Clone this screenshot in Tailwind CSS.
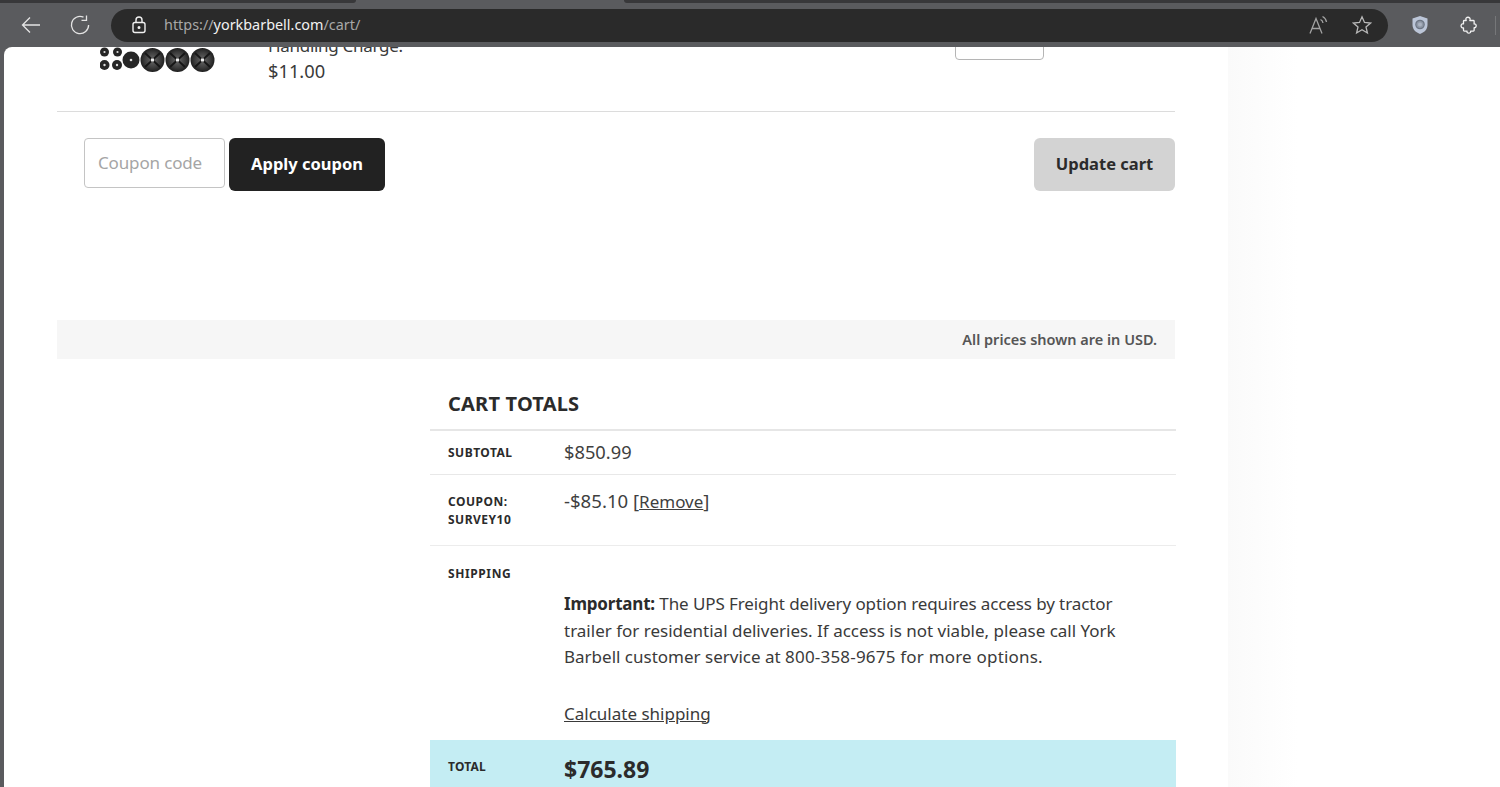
<!DOCTYPE html>
<html>
<head>
<meta charset="utf-8">
<script src="https://cdn.jsdelivr.net/npm/@tailwindcss/browser@4"></script>
<title>Cart</title>
</head>
<body class="h-[787px] w-[1500px] overflow-hidden bg-[#5a5b5e] font-['Noto_Sans','Liberation_Sans',sans-serif] text-[#2b2b2b]">
  <div class="flex h-[3px] w-full">
    <div class="w-[356px] rounded-br-[4px] bg-[#38383a]"></div>
    <div class="ml-[268px] flex-1 rounded-bl-[4px] bg-[#38383a]"></div>
  </div>
  <header class="flex h-[44px] items-center">
    <div class="flex w-[111px] items-center pl-[20px]">
      <svg class="h-[22px] w-[22px]" viewBox="0 0 22 22" fill="none" stroke="#e4e4e4" stroke-width="1.3"><path d="M20 11H2.500M10 3.500 2.500 11l7.500 7.500"/></svg>
      <svg class="ml-[27px] h-[22px] w-[22px]" viewBox="0 0 22 22" fill="none" stroke="#e4e4e4" stroke-width="1.3"><path d="M14.500 3.200A8.600 8.600 0 1 0 19.600 11"/><path d="M17.500 1.500v4.800h-5"/></svg>
    </div>
    <div class="flex h-[33px] w-[1277px] items-center rounded-full bg-[#2a2a2a] pl-[20px] pr-[16px]">
      <svg class="h-[18px] w-[16px]" viewBox="0 0 16 18" fill="none" stroke="#f0f0f0" stroke-width="1.400"><rect x="2" y="6.500" width="12" height="10" rx="2"/><path d="M5 6.500V4a3 3 0 0 1 6 0v2.500"/><circle cx="8" cy="11.500" r=".8" fill="#f0f0f0"/></svg>
      <div class="ml-[17px] text-[14.4px] text-[#a8a8a8]">https://<span class="text-[#f2f2f2]">yorkbarbell.com</span>/cart/</div>
      <svg class="ml-auto mr-[1px] h-[20px] w-[20px]" viewBox="0 0 20 20" fill="none" stroke="#a2a2a2" stroke-width="1.300"><path d="M1 18.500 7 3.500l6 15M3 13.500h8"/><path d="M11.500 4.500a4.500 4.500 0 0 1 2.500 3.500M13.500 1.500a7.500 7.500 0 0 1 4 5.500"/></svg>
      <svg class="ml-[22px] h-[20px] w-[20px]" viewBox="0 0 20 20" fill="none" stroke="#b8b8b8" stroke-width="1.300"><path d="m10 1.800 2.500 5.600 6.100.6-4.600 4 1.400 6-5.400-3.200L4.600 18l1.400-6-4.600-4 6.100-.6z"/></svg>
    </div>
    <svg class="ml-[23px] h-[20px] w-[18px]" viewBox="0 0 18 20"><path d="M9 1 16.500 3.500V10c0 4.500-3.500 7.500-7.500 9-4-1.500-7.500-4.500-7.500-9V3.500z" fill="#bcc6d8"/><circle cx="9" cy="9.500" r="4.200" fill="#8f98a6" stroke="#6d7684" stroke-width="1.200"/><circle cx="9" cy="9.500" r="2" fill="#aab2c0"/></svg>
    <svg class="ml-[30px] h-[18px] w-[18px]" viewBox="0 0 22 22" fill="none" stroke="#f2f2f2" stroke-width="1.600" stroke-linejoin="round"><path d="M8.500 4.500C8 2.800 9.300 1.500 11 1.500s2.900 1.400 2.500 3l-.3 1h4.300c.6 0 1 .4 1 1v3.300c1.700-.4 2.500.8 2.500 2.200s-.9 2.700-2.500 2.200v3.300c0 .6-.4 1-1 1h-3.300c.4 1.600-.8 2.500-2.200 2.500s-2.600-1-2.200-2.500H6.500c-.6 0-1-.4-1-1v-3c-1.700.5-3-.8-3-2.500s1.300-2.900 3-2.500V6.500c0-.6.4-1 1-1h2.300z"/></svg>
    <div class="ml-[18px] h-[19px] w-px bg-[#767779]"></div>
  </header>
  <main class="relative ml-[4px] h-[740px] overflow-hidden rounded-tl-[8px] bg-white">
    <div class="absolute inset-y-0 left-[1224px] w-[70px] bg-gradient-to-r from-[#fafafa] to-white"></div>
    <div class="relative ml-[53px] w-[1118px]">
      <section class="relative h-[65px] border-b border-[#dcdcdc]">
        <svg class="absolute left-[43px] top-[-4px] h-[34px] w-[120px]" viewBox="0 0 120 34">
          <defs>
            <radialGradient id="plate"><stop offset="0" stop-color="#6a6a6a"/><stop offset=".65" stop-color="#3c3c3c"/><stop offset="1" stop-color="#1f1f1f"/></radialGradient>
          </defs>
          <g fill="#262626">
            <circle cx="4.500" cy="9" r="4.500"/><circle cx="17.500" cy="9" r="4.500"/>
            <circle cx="4.500" cy="22" r="5"/><circle cx="17" cy="22" r="5"/>
            <circle cx="31" cy="17" r="8.500"/>
          </g>
          <g fill="#ddd"><circle cx="4.500" cy="9" r="1.100"/><circle cx="17.500" cy="9" r="1.100"/><circle cx="4.500" cy="22" r="1.200"/><circle cx="17" cy="22" r="1.200"/><circle cx="31" cy="17" r="1.300"/></g>
          <g stroke="#161616" stroke-width="1.800">
            <g><circle cx="52.500" cy="17" r="12" fill="url(#plate)" stroke="none"/><path d="m45 10 15 14M60 10 45 24"/></g>
            <g><circle cx="77.500" cy="17" r="12" fill="url(#plate)" stroke="none"/><path d="m70 10 15 14M85 10 70 24"/></g>
            <g><circle cx="102.500" cy="17" r="12" fill="url(#plate)" stroke="none"/><path d="m95 10 15 14M110 10 95 24"/></g>
          </g>
          <g fill="#eee"><rect x="51" y="15.500" width="3" height="3"/><rect x="76" y="15.500" width="3" height="3"/><rect x="101" y="15.500" width="3" height="3"/></g>
        </svg>
        <div class="absolute left-[211px] top-[-14px] text-[17px] leading-[26px] text-[#3a3a3a]">
          <p class="tracking-[-0.3px]">Handling Charge:</p>
          <p class="text-[18.300px] leading-[24px]">$11.00</p>
        </div>
        <div class="absolute left-[898px] top-[-10px] h-[23px] w-[89px] rounded-[4px] border border-[#b5b5b5] bg-white"></div>
      </section>
      <section class="flex items-start justify-between pl-[27px] pt-[26px]">
        <div class="flex items-start gap-[4px]">
          <div class="flex h-[50px] w-[141px] items-center rounded-[4px] border border-[#c4c4c4] pl-[13px] text-[17px] tracking-[-0.15px] text-[#a5a5a5]">Coupon code</div>
          <button class="flex h-[53px] w-[156px] items-center justify-center rounded-[6px] bg-[#222222] text-[16.500px] font-bold text-white">Apply coupon</button>
        </div>
        <button class="flex h-[53px] w-[141px] items-center justify-center rounded-[6px] bg-[#d3d3d3] text-[16.500px] font-bold text-[#2b2b2b]">Update cart</button>
      </section>
      <div class="mt-[129px] flex h-[39px] items-center justify-end bg-[#f6f6f6] pr-[18px] text-[14.500px] font-semibold text-[#555555]">All prices shown are in USD.</div>
      <section class="ml-[373px] w-[746px]">
        <h2 class="flex h-[72px] items-end border-b-2 border-[#e6e6e6] pb-[10px] pl-[18px] text-[20px] font-bold tracking-[0.2px] text-[#2b2b2b]">CART TOTALS</h2>
        <div class="flex h-[44px] border-b border-[#e8e8e8] pl-[18px] pt-[10px]">
          <div class="w-[116px] pt-[3px] text-[12px] font-bold tracking-[0.5px]">SUBTOTAL</div>
          <div class="mt-[-2px] text-[18.300px] leading-[26px] text-[#3f3f3f]">$850.99</div>
        </div>
        <div class="flex h-[71px] border-b border-[#ececec] pl-[18px] pt-[18px]">
          <div class="w-[116px] text-[12px] font-bold leading-[18px] tracking-[0.5px]">COUPON:<br>SURVEY10</div>
          <div class="mt-[-5px] text-[18.600px] leading-[26px] text-[#3f3f3f]">-$85.10 [<a class="text-[17px] underline">Remove</a>]</div>
        </div>
        <div class="flex h-[194px] pl-[18px] pt-[19px]">
          <div class="w-[116px] text-[12px] font-bold tracking-[0.6px]">SHIPPING</div>
          <div class="w-[590px] pt-[26px] text-[17px] leading-[26.500px] text-[#3a3a3a]">
            <p><strong class="tracking-[-0.2px] text-[#2b2b2b]">Important:</strong> <span class="tracking-[-0.1px]">The UPS Freight delivery option requires access by tractor</span> trailer for residential deliveries. If access is not viable, please call York Barbell customer service at <span class="tracking-[0.2px]">800-358-9675 for more options.</span></p>
            <p class="mt-[30px]"><a class="underline">Calculate shipping</a></p>
          </div>
        </div>
        <div class="flex h-[60px] bg-[#c4edf3] pl-[18px] pt-[16px]">
          <div class="w-[116px] pt-[2px] text-[12px] font-bold tracking-[0.2px]">TOTAL</div>
          <div class="text-[23px] font-bold leading-[26px]">$765.89</div>
        </div>
      </section>
    </div>
  </main>
</body>
</html>
